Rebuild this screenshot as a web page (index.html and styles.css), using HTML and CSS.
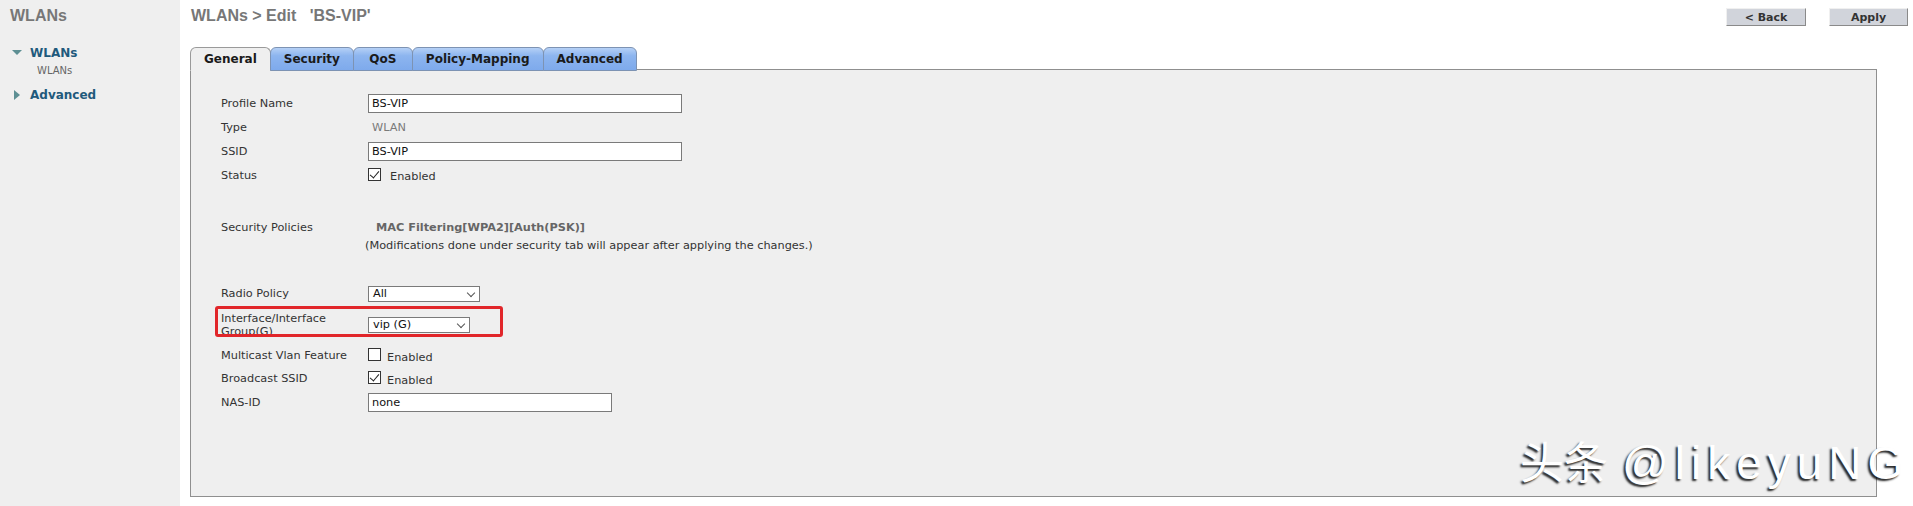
FILE: index.html
```html
<!DOCTYPE html>
<html>
<head>
<meta charset="utf-8">
<title>WLANs &gt; Edit</title>
<link rel="stylesheet" href="styles.css">
</head>
<body>
<div class="page">
  <aside class="sidebar">
    <div class="side-title">WLANs</div>
    <ul class="tree">
      <li class="node"><span class="tri-down"></span><span class="node-label">WLANs</span></li>
      <li class="leaf">WLANs</li>
      <li class="node node-adv"><span class="tri-right"></span><span class="node-label">Advanced</span></li>
    </ul>
  </aside>
  <main class="main">
    <div class="topbar">
      <h1 class="page-title">WLANs &gt; Edit &nbsp;&nbsp;'BS-VIP'</h1>
      <div class="actions">
        <button class="btn btn-back">&lt; Back</button>
        <button class="btn btn-apply">Apply</button>
      </div>
    </div>
    <div class="tabs">
      <div class="tab active">General</div>
      <div class="tab">Security</div>
      <div class="tab tab-qos">QoS</div>
      <div class="tab">Policy-Mapping</div>
      <div class="tab">Advanced</div>
    </div>
    <div class="panel">
      <div class="row r24">
        <div class="label">Profile Name</div>
        <div class="value"><div class="textbox wide">BS-VIP</div></div>
      </div>
      <div class="row r24">
        <div class="label">Type</div>
        <div class="value"><span class="static">WLAN</span></div>
      </div>
      <div class="row r24">
        <div class="label">SSID</div>
        <div class="value"><div class="textbox wide">BS-VIP</div></div>
      </div>
      <div class="row r24">
        <div class="label">Status</div>
        <div class="value check-line status-line"><span class="checkbox checked"></span><span class="check-text">Enabled</span></div>
      </div>
      <div class="spacer sp30"></div>
      <div class="row r20">
        <div class="label">Security Policies</div>
        <div class="value"><span class="policy">MAC Filtering[WPA2][Auth(PSK)]</span></div>
      </div>
      <div class="row r17">
        <div class="label"></div>
        <div class="value"><span class="note">(Modifications done under security tab will appear after applying the changes.)</span></div>
      </div>
      <div class="spacer sp28"></div>
      <div class="row r23">
        <div class="label">Radio Policy</div>
        <div class="value"><div class="select sel-radio">All<span class="chev"></span></div></div>
      </div>
      <div class="row r39 highlight-row">
        <div class="label two-line">Interface/Interface<br>Group(G)</div>
        <div class="value"><div class="select sel-iface">vip (G)<span class="chev"></span></div></div>
        <span class="mark-box"></span>
      </div>
      <div class="row r23">
        <div class="label">Multicast Vlan Feature</div>
        <div class="value check-line"><span class="checkbox"></span><span class="check-text">Enabled</span></div>
      </div>
      <div class="row r23">
        <div class="label">Broadcast SSID</div>
        <div class="value check-line"><span class="checkbox checked"></span><span class="check-text">Enabled</span></div>
      </div>
      <div class="row r24">
        <div class="label">NAS-ID</div>
        <div class="value"><div class="textbox narrow">none</div></div>
      </div>
    </div>
  </main>
  <div class="watermark"><span class="wm-cjk">头条</span> <span class="wm-latin">@likeyuNG</span></div>
</div>
</body>
</html>
```
FILE: styles.css
```css
html, body {
  margin: 0;
  padding: 0;
  height: 100%;
  background: #ffffff;
}

.page {
  display: flex;
  min-height: 100vh;
  font-family: "DejaVu Sans", Verdana, sans-serif;
  font-size: 11.3px;
  color: #333;
  position: relative;
  overflow: hidden;
}

/* Sidebar */
.sidebar {
  width: 180px;
  flex: 0 0 180px;
  background: #efefef;
}

.side-title {
  padding: 7px 10px 0;
  height: 18px;
  line-height: 18px;
  font-family: "Liberation Sans", Arial, sans-serif;
  font-weight: bold;
  font-size: 16px;
  color: #777;
}

.tree {
  list-style: none;
  margin: 0;
  padding: 19px 0 0 0;
}

.node {
  display: flex;
  align-items: center;
  height: 17px;
  padding-left: 12px;
}

.node-label {
  font-weight: bold;
  font-size: 12px;
  color: #1f5a7c;
}

.tri-down {
  width: 0;
  height: 0;
  border-left: 5px solid transparent;
  border-right: 5px solid transparent;
  border-top: 5px solid #5d8f93;
  margin-right: 8px;
}

.tri-right {
  width: 0;
  height: 0;
  border-top: 5px solid transparent;
  border-bottom: 5px solid transparent;
  border-left: 6px solid #5d8f93;
  margin-left: 2px;
  margin-right: 10px;
}

.leaf {
  height: 14px;
  line-height: 14px;
  padding-left: 37px;
  padding-top: 3px;
  font-size: 10px;
  color: #666;
  margin-bottom: 8px;
}

.node-adv {
  height: 17px;
}

/* Main */
.main {
  flex: 1;
  padding: 0 5px 0 10px;
  display: flex;
  flex-direction: column;
}

.topbar {
  display: flex;
  justify-content: space-between;
  align-items: flex-start;
  height: 47px;
}

.page-title {
  margin: 7px 0 0 1px;
  line-height: 18px;
  font-family: "Liberation Sans", Arial, sans-serif;
  font-weight: bold;
  font-size: 16px;
  color: #777;
}

.actions {
  display: flex;
  gap: 23px;
  margin-top: 8px;
}

.btn {
  height: 18px;
  padding: 0;
  font-family: "DejaVu Sans", Verdana, sans-serif;
  font-weight: bold;
  font-size: 11px;
  color: #333;
  background: #d1d4db;
  border: 1px solid;
  border-color: #f0f0f0 #8a8a8a #8a8a8a #f0f0f0;
  line-height: 15px;
}

.btn-back { width: 80px; }
.btn-apply { width: 79px; }

/* Tabs */
.tabs {
  display: flex;
  height: 23px;
  margin-bottom: -1px;
  position: relative;
  z-index: 1;
}

.tab {
  box-sizing: border-box;
  height: 24px;
  padding: 0 13px;
  line-height: 22px;
  text-align: center;
  font-weight: bold;
  font-size: 12px;
  color: #1a1a1a;
  border: 1px solid #7d93b3;
  border-radius: 6px 6px 0 0;
  background: linear-gradient(#b5d0f6, #8db5ef 35%, #7eaaec);
  margin-right: -1px;
}

.tab-qos {
  min-width: 60px;
}

.tab.active {
  background: #efefef;
  border-color: #9a9a9a;
  border-bottom-color: #efefef;
}

/* Panel */
.panel {
  box-sizing: border-box;
  width: 1687px;
  height: 428px;
  background: #efefef;
  border: 1px solid #8f8f8f;
  padding: 21px 0 0 30px;
}

.row {
  display: flex;
  align-items: center;
  position: relative;
}

.r24 { height: 24px; }
.r23 { height: 23px; }
.r20 { height: 20px; }
.r17 { height: 17px; }
.r39 { height: 39px; }

.spacer.sp30 { height: 30px; }
.spacer.sp28 { height: 28px; }

.label {
  width: 147px;
  flex: 0 0 147px;
  color: #333;
}

.label.two-line {
  line-height: 13px;
  padding-top: 1px;
}

.value {
  display: flex;
  align-items: center;
}

.textbox {
  box-sizing: border-box;
  height: 19px;
  background: #fff;
  border: 1px solid #7a7a7a;
  padding-left: 3px;
  line-height: 17px;
  color: #111;
}

.textbox.wide { width: 314px; }
.textbox.narrow { width: 244px; }

.static {
  padding-left: 4px;
  color: #7a7a7a;
}

.policy {
  padding-left: 8px;
  font-weight: bold;
  color: #666;
}

.note {
  margin-left: -3px;
  color: #333;
}

.select {
  box-sizing: border-box;
  position: relative;
  height: 16px;
  background: #fff;
  border: 1px solid #7a7a7a;
  padding-left: 4px;
  line-height: 14px;
  color: #111;
}

.sel-radio { width: 112px; }
.sel-iface { width: 102px; }

.chev {
  position: absolute;
  right: 5px;
  top: 3px;
  width: 5px;
  height: 5px;
  border-right: 1px solid #555;
  border-bottom: 1px solid #555;
  transform: rotate(45deg);
}

.check-line {
  gap: 6px;
}

.status-line {
  gap: 9px;
}

.checkbox {
  box-sizing: border-box;
  position: relative;
  width: 13px;
  height: 13px;
  border: 1px solid #333;
  background: #fff;
  margin-top: -2px;
}

.checkbox.checked::after {
  content: "";
  position: absolute;
  left: 3px;
  top: 0px;
  width: 4px;
  height: 8px;
  border-right: 1px solid #222;
  border-bottom: 1px solid #222;
  transform: rotate(40deg);
}

.check-text {
  color: #333;
  padding-top: 3px;
}

.mark-box {
  position: absolute;
  left: -6px;
  top: 1px;
  width: 282px;
  height: 25px;
  border: 3px solid #e1262a;
  border-radius: 3px;
  pointer-events: none;
}

/* Watermark overlay */
.watermark {
  position: absolute;
  left: 1520px;
  top: 432px;
  line-height: 56px;
  color: #fff;
  text-shadow: -2px 2px 2px rgba(0, 0, 0, 0.85);
  white-space: nowrap;
  font-size: 44px;
}

.wm-cjk {
  font-family: "Noto Sans CJK SC", sans-serif;
  font-size: 44px;
}

.wm-latin {
  font-family: "Liberation Sans", Arial, sans-serif;
  font-size: 46px;
  letter-spacing: 6px;
}
```
